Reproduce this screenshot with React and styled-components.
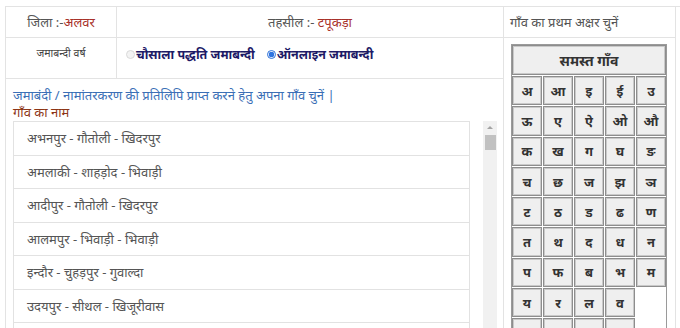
import React, { useState } from "react";
import styled, { createGlobalStyle } from "styled-components";

const GlobalStyle = createGlobalStyle`
  html, body {
    margin: 0;
    padding: 0;
    background: #fff;
    font-family: "Noto Sans", "Open Sans", sans-serif;
  }
`;

const villages = [
  "अभनपुर - गौतोली - खिदरपुर",
  "अमलाकी - शाहड़ोद - भिवाड़ी",
  "आदीपुर - गौतोली - खिदरपुर",
  "आलमपुर - भिवाड़ी - भिवाड़ी",
  "इन्दौर - चुहड़पुर - गुवाल्दा",
  "उदयपुर - सीथल - खिजूरीवास",
  "ककराली - सीथल - खिजूरीवास",
];

const letterRows = [
  ["अ", "आ", "इ", "ई", "उ"],
  ["ऊ", "ए", "ऐ", "ओ", "औ"],
  ["क", "ख", "ग", "घ", "ङ"],
  ["च", "छ", "ज", "झ", "ञ"],
  ["ट", "ठ", "ड", "ढ", "ण"],
  ["त", "थ", "द", "ध", "न"],
  ["प", "फ", "ब", "भ", "म"],
  ["य", "र", "ल", "व", ""],
  ["श", "ष", "स", "ह", ""],
];

const App = () => {
  const [mode, setMode] = useState("online");
  const [letter, setLetter] = useState("");

  return (
    <Page>
      <GlobalStyle />
      <Sheet>
        <Cell $center>
          <Label>जिला :-</Label>
          <Value>अलवर</Value>
        </Cell>
        <Cell $center>
          <Label>तहसील :- </Label>
          <Value>टपूकड़ा</Value>
        </Cell>
        <Cell>
          <Label>गाँव का प्रथम अक्षर चुनें</Label>
        </Cell>

        <YearCell>जमाबन्दी वर्ष</YearCell>
        <RadioCell>
          <RadioOption onClick={() => setMode("chausala")}>
            <RadioDot $checked={mode === "chausala"} />
            चौसाला पद्धति जमाबन्दी
          </RadioOption>
          <RadioOption onClick={() => setMode("online")}>
            <RadioDot $checked={mode === "online"} />
            ऑनलाइन जमाबन्दी
          </RadioOption>
        </RadioCell>

        <LetterCell>
          <LetterGrid>
            <LetterButton $wide onClick={() => setLetter("")}>
              समस्त गाँव
            </LetterButton>
            {letterRows.flat().map((l, i) =>
              l ? (
                <LetterButton key={i} $active={letter === l} onClick={() => setLetter(l)}>
                  {l}
                </LetterButton>
              ) : (
                <EmptySlot key={i} />
              )
            )}
          </LetterGrid>
        </LetterCell>

        <VillageCell>
          <Hint>जमाबंदी / नामांतरकरण की प्रतिलिपि प्राप्त करने हेतु अपना गाँव चुनें |</Hint>
          <ListTitle>गाँव का नाम</ListTitle>
          <ListArea>
            <VillageList>
              {villages.map((v) => (
                <VillageItem key={v}>{v}</VillageItem>
              ))}
            </VillageList>
            <ScrollTrack>
              <ScrollArrow />
              <ScrollThumb />
            </ScrollTrack>
          </ListArea>
        </VillageCell>
      </Sheet>
    </Page>
  );
};

const Page = styled.div`
  padding: 6px 0 0 5px;
  height: 328px;
  box-sizing: border-box;
  overflow: hidden;
`;

const Sheet = styled.div`
  display: grid;
  grid-template-columns: 111px 387px 172px;
  grid-template-rows: 31px 41px auto;
  border-top: 1px solid #e3e3e3;
  border-left: 1px solid #e3e3e3;
  font-size: 13px;
`;

const Cell = styled.div`
  display: flex;
  align-items: center;
  justify-content: ${(p) => (p.$center ? "center" : "flex-start")};
  padding: 0 ${(p) => (p.$center ? "0" : "6px")};
  border-right: 1px solid #e3e3e3;
  border-bottom: 1px solid #e3e3e3;
  white-space: pre;
`;

const Label = styled.span`
  color: #555;
`;

const Value = styled.span`
  color: #a8312a;
`;

const YearCell = styled.div`
  display: flex;
  justify-content: center;
  padding-top: 8px;
  font-size: 10.5px;
  color: #444;
  border-right: 1px solid #e3e3e3;
  border-bottom: 1px solid #e3e3e3;
`;

const RadioCell = styled.div`
  display: flex;
  align-items: flex-start;
  gap: 12px;
  padding: 8px 0 0 9px;
  border-right: 1px solid #e3e3e3;
  border-bottom: 1px solid #e3e3e3;
`;

const RadioOption = styled.label`
  display: flex;
  align-items: center;
  gap: 1px;
  font-size: 12.5px;
  font-weight: 700;
  color: #1d1a66;
  cursor: pointer;
`;

const RadioDot = styled.span`
  width: 9px;
  height: 9px;
  border-radius: 50%;
  box-sizing: border-box;
  border: 1px solid ${(p) => (p.$checked ? "#2c6fd6" : "#d9d9d9")};
  background: ${(p) => (p.$checked ? "radial-gradient(circle, #2f74e0 0 2.6px, #fff 3.1px)" : "#f3f3f3")};
`;

const LetterCell = styled.div`
  grid-column: 3;
  grid-row: 2 / span 2;
  padding: 6px 0 0 7px;
  border-right: 1px solid #e3e3e3;
`;

const LetterGrid = styled.div`
  display: grid;
  grid-template-columns: repeat(5, 1fr);
  grid-template-rows: 30px;
  grid-auto-rows: 29.3px;
  gap: 1px;
  width: 156px;
  box-sizing: border-box;
  border: 1px solid #9a9a9a;
  background: #fff;
`;

const LetterButton = styled.button`
  grid-column: ${(p) => (p.$wide ? "1 / -1" : "auto")};
  margin: 0;
  padding: 0;
  font-family: inherit;
  font-size: ${(p) => (p.$wide ? "14px" : "13px")};
  font-weight: 700;
  color: #333;
  background: ${(p) => (p.$active ? "#dcdcdc" : "#efefef")};
  border: 1px solid #8d8d8d;
  box-shadow: inset 0 0 0 1px #c9c9c9;
  cursor: pointer;
`;

const EmptySlot = styled.span``;

const VillageCell = styled.div`
  grid-column: 1 / span 2;
  padding: 8px 0 0 7px;
  border-right: 1px solid #e3e3e3;
`;

const Hint = styled.div`
  color: #3b6fb6;
  font-size: 13px;
  line-height: 17px;
`;

const ListTitle = styled.div`
  color: #8d3516;
  font-size: 13px;
  line-height: 16px;
`;

const ListArea = styled.div`
  display: flex;
  align-items: flex-start;
  gap: 13px;
  margin-top: 1px;
`;

const VillageList = styled.ul`
  list-style: none;
  margin: 0;
  padding: 0;
  width: 457px;
`;

const VillageItem = styled.li`
  height: 34.5px;
  box-sizing: border-box;
  display: flex;
  align-items: center;
  padding-left: 13px;
  margin-bottom: -1px;
  border: 1px solid #e2e2e2;
  color: #555;
  font-size: 13px;
`;

const ScrollTrack = styled.div`
  width: 14px;
  height: 220px;
  background: #f1f1f1;
  display: flex;
  flex-direction: column;
  align-items: center;
`;

const ScrollArrow = styled.div`
  margin-top: 5px;
  width: 0;
  height: 0;
  border-left: 3px solid transparent;
  border-right: 3px solid transparent;
  border-bottom: 3px solid #a3a3a3;
`;

const ScrollThumb = styled.div`
  margin-top: 6px;
  width: 11px;
  height: 15px;
  background: #c1c1c1;
`;

export default App;
